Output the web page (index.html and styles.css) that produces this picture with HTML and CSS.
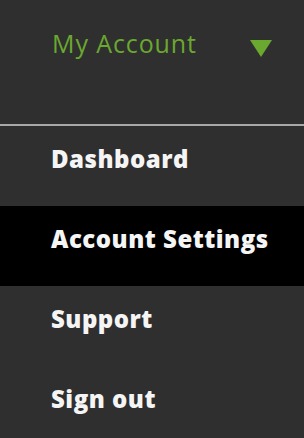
FILE: index.html
```html
<!DOCTYPE html>
<html lang="en">
<head>
    <meta charset="UTF-8">
    <meta name="viewport" content="width=device-width, initial-scale=1.0">
    <title>My Account</title>
    <link rel="stylesheet" href="styles.css">
</head>
<body>
    <!-- Account menu header -->
    <div class="menu-header">
        <span class="menu-title">My Account</span>
        <svg class="menu-caret" width="22" height="17" viewBox="0 0 22 17">
            <polygon points="0,0 22,0 11,17" fill="#6aa82f"/>
        </svg>
    </div>

    <!-- Menu items -->
    <ul class="menu-list">
        <li class="menu-item">Dashboard</li>
        <li class="menu-item active">Account Settings</li>
        <li class="menu-item">Support</li>
        <li class="menu-item">Sign out</li>
    </ul>
</body>
</html>
```

FILE: styles.css
```css
body {
    font-family: 'Open Sans', sans-serif;
    background-color: #2f2f2f;
    color: #ffffff;
    margin: 0;
    padding: 0;
    height: 100vh;
    overflow: hidden; /* Prevent scrolling */
}

.menu-header {
    display: flex;
    justify-content: space-between;
    align-items: flex-start;
    height: 126px;
    box-sizing: border-box;
    padding: 28px 32px 0 52px;
    border-bottom: 2px solid #a8a8a8;
}

.menu-title {
    color: #6aa82f;
    font-size: 25px;
    line-height: 30px;
    letter-spacing: 0.9px;
}

.menu-caret {
    display: block;
    margin-top: 12px;
}

.menu-list {
    list-style: none;
    margin: 0;
    padding: 0;
}

.menu-item {
    height: 80px;
    box-sizing: border-box;
    padding: 18px 0 0 51px;
    font-size: 24px;
    font-weight: 800;
    line-height: 30px;
    letter-spacing: 0.5px;
    color: #f5f5f5;
}

.menu-item.active {
    background-color: #000000;
}
```
